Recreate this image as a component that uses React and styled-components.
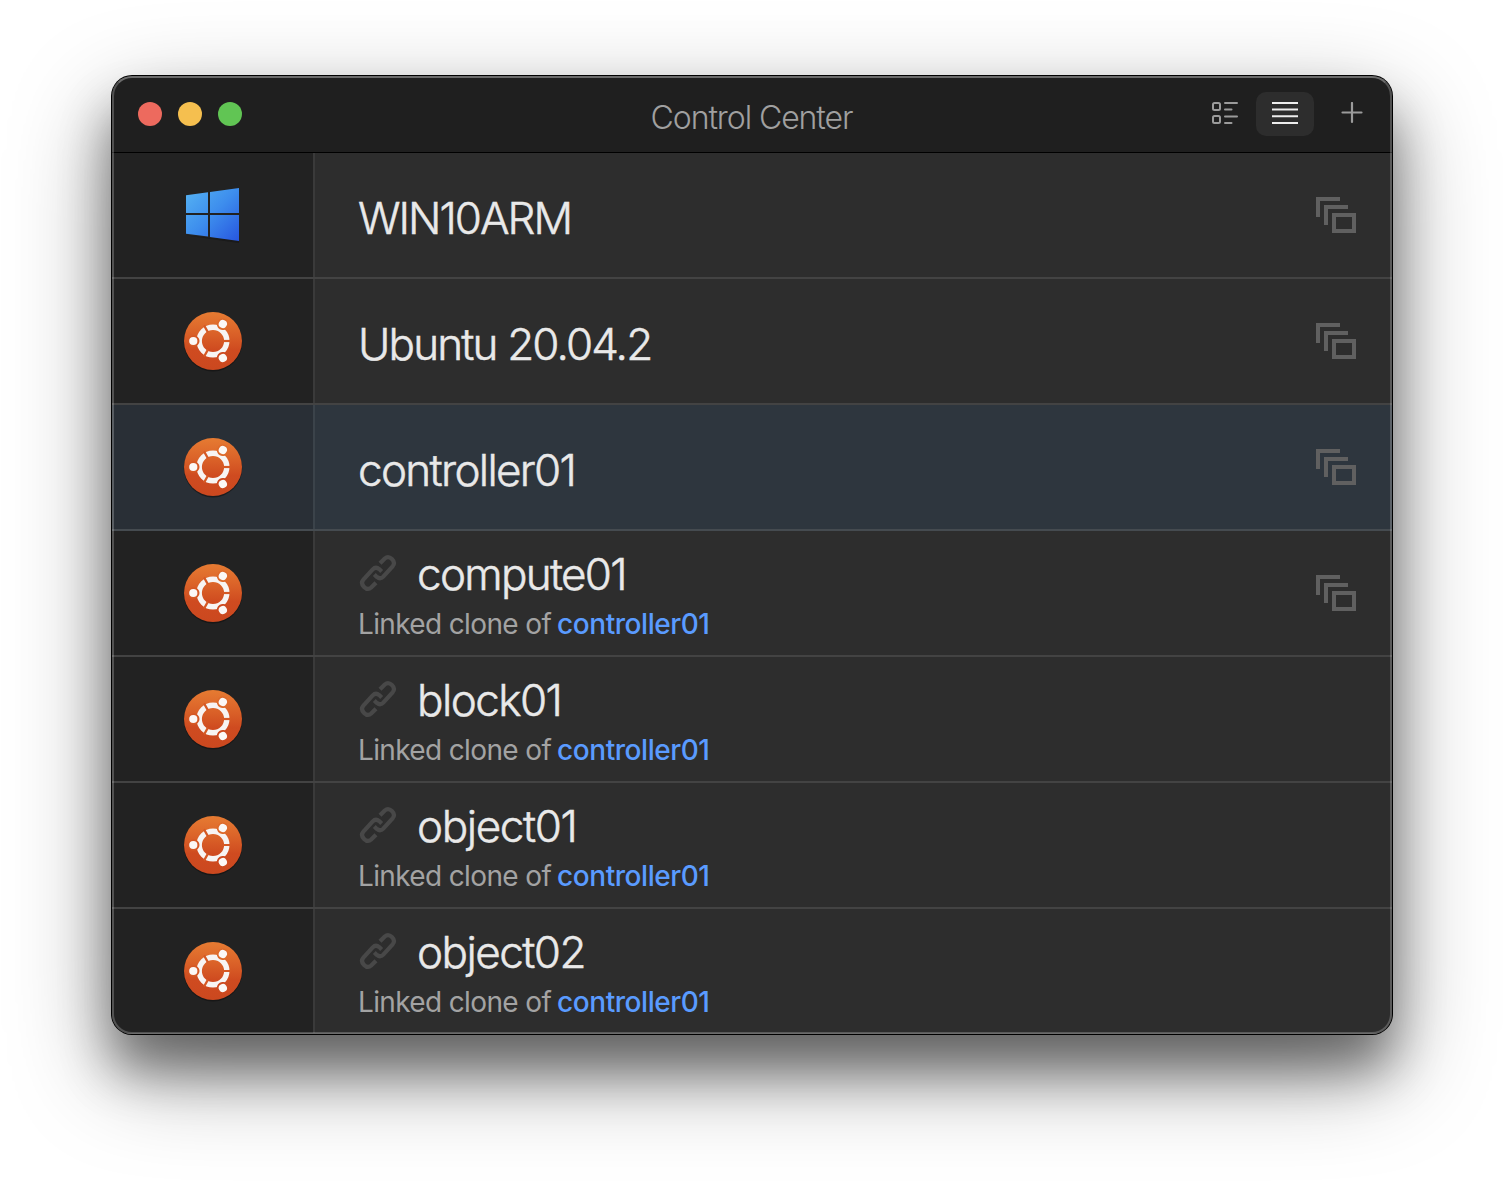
import React from "react";
import styled, { createGlobalStyle } from "styled-components";

const GlobalStyle = createGlobalStyle`
  * { box-sizing: border-box; }
  html, body { margin: 0; background: #fff; }
  body { font-family: Inter, "Noto Sans", sans-serif; overflow: hidden; }
`;

const Desktop = styled.main`
  width: 1504px;
  height: 1182px;
  padding: 76px 112px 148px;
  background: #fff;
  overflow: hidden;
`;

const Window = styled.section`
  position: relative;
  display: flex;
  flex-direction: column;
  width: 1280px;
  height: 958px;
  border-radius: 20px;
  background: #2d2d2d;
  box-shadow: 0 0 0 1px #000, 0 36px 50px rgba(0, 0, 0, 0.42), 0 36px 100px rgba(0, 0, 0, 0.4);

  &::after {
    content: "";
    position: absolute;
    inset: 0;
    border: 2px solid rgba(255, 255, 255, 0.22);
    border-top-color: rgba(255, 255, 255, 0.34);
    border-radius: 20px;
    pointer-events: none;
  }
`;

const TitleBar = styled.header`
  display: grid;
  grid-template-columns: 1fr auto 1fr;
  align-items: center;
  flex: none;
  height: 77px;
  padding: 0 29px 0 26px;
  border-bottom: 1px solid #000;
  border-radius: 20px 20px 0 0;
  background: #1f1f1f;
`;

const Lights = styled.div`
  display: flex;
  gap: 16px;
`;

const Light = styled.span`
  width: 24px;
  height: 24px;
  border-radius: 50%;
  background: ${(p) => p.$color};
`;

const Title = styled.h1`
  margin: 8px 0 0 2px;
  font-size: 32px;
  font-weight: 300;
  line-height: 40px;
  letter-spacing: ${(p) => p.$spacing}px;
  color: #a0a0a0;
  white-space: nowrap;
`;

const Tools = styled.div`
  display: flex;
  justify-content: flex-end;
  align-items: center;
`;

const ToolButton = styled.button`
  display: flex;
  align-items: center;
  justify-content: center;
  width: ${(p) => p.$width}px;
  height: 44px;
  margin: 0 0 0 ${(p) => p.$gap || 0}px;
  padding: 0 0 ${(p) => p.$lift || 0}px;
  border: 0;
  border-radius: 10px;
  background: ${(p) => (p.$active ? "#2d2d2d" : "transparent")};
`;

const List = styled.ul`
  flex: 1;
  min-height: 0;
  margin: 0;
  padding: 0;
  list-style: none;
  overflow: hidden;
  border-radius: 0 0 20px 20px;
`;

const Row = styled.li`
  display: flex;
  height: 126px;
  border-bottom: 2px solid ${(p) => (p.$selected ? "#454b50" : "#434343")};
  background: ${(p) => (p.$selected ? "#2e363e" : "#2d2d2d")};
`;

const IconCell = styled.div`
  display: flex;
  justify-content: center;
  flex: none;
  width: 203px;
  padding-top: ${(p) => p.$top}px;
  border-right: 2px solid ${(p) => (p.$selected ? "#3b434a" : "#3a3a3a")};
  background: ${(p) => (p.$selected ? "#292f36" : "#222222")};
`;

const Details = styled.div`
  display: flex;
  flex: 1;
  flex-direction: column;
  padding: ${(p) => (p.$linked ? 16 : 38)}px 0 0 43px;
`;

const NameLine = styled.div`
  display: flex;
  align-items: center;
  gap: 19px;
  height: 54px;
`;

const Name = styled.span`
  font-size: 44px;
  font-weight: 300;
  line-height: 54px;
  letter-spacing: ${(p) => p.$spacing}px;
  color: #e9e9e9;
  -webkit-text-stroke: 0.5px #e9e9e9;
  white-space: nowrap;
`;

const Origin = styled.div`
  display: flex;
  gap: 6px;
  margin-top: 5px;
  font-size: 28px;
  line-height: 36px;
  letter-spacing: ${(p) => p.$spacing}px;
  color: #a3a3a3;
  white-space: nowrap;
`;

const OriginLink = styled.span`
  font-weight: 500;
  letter-spacing: ${(p) => p.$spacing}px;
  color: #5a9bff;
`;

const SnapshotCell = styled.div`
  flex: none;
  padding: 44px 35px 0 0;
`;

const LinkGlyph = styled.svg`
  flex: none;
  margin-top: -2px;
`;

function WindowsIcon() {
  return (
    <svg width="55" height="56" viewBox="0 0 55 56">
      <defs>
        <linearGradient id="winFill" x1="0" y1="0" x2="1" y2="1">
          <stop offset="0" stopColor="#56b4f3" />
          <stop offset="0.5" stopColor="#3d8ded" />
          <stop offset="1" stopColor="#2756df" />
        </linearGradient>
      </defs>
      <path fill="#111" opacity=".5" d="M1 48.500 23 51.500 25 52 54 56V53Z" />
      <path
        fill="url(#winFill)"
        d="M1 8.200 23 5.200V26H1ZM25 4.900 54 1V26H25ZM1 28H23V49.600L1 46.800ZM25 28H54V54L25 50Z"
      />
    </svg>
  );
}

function UbuntuIcon() {
  return (
    <svg width="62" height="62" viewBox="-31 -31 62 62">
      <defs>
        <linearGradient id="ubuntuFill" x1="0" y1="0" x2="0" y2="1">
          <stop offset="0" stopColor="#e67b32" />
          <stop offset="0.35" stopColor="#db6329" />
          <stop offset="0.65" stopColor="#cf4b20" />
          <stop offset="1" stopColor="#cb481f" />
        </linearGradient>
      </defs>
      <circle cy="1.200" r="29.200" fill="#111" opacity=".6" />
      <circle r="29" fill="url(#ubuntuFill)" />
      <circle r="13.800" fill="none" stroke="#f7f4f3" strokeWidth="5.400" />
      {[0, 120, 240].map((angle) => (
        <g key={angle} transform={`rotate(${angle})`}>
          <path d="M10 0H18" stroke="#d55925" strokeWidth="2.200" />
          <circle cx="-19.300" r="5.800" fill={angle === 0 ? "#d55925" : angle === 120 ? "#dd6a2b" : "#cd4a20"} />
          <circle cx="-19.700" r="4.100" fill="#fbf8f6" />
        </g>
      ))}
    </svg>
  );
}

function SnapshotIcon() {
  return (
    <svg width="41" height="37" viewBox="0 0 41 37" fill="none" stroke="#606060" strokeWidth="4">
      <path d="M2 20V2H24M10 28V10H32" />
      <rect x="18" y="18" width="20" height="16" />
    </svg>
  );
}

const LINK_HALF =
  "M26 15.300L30.800 10.500Q34.200 7.400 37.900 11.100Q41.700 14.800 38.600 18.400L29.300 28.600Q26.200 31.800 22.800 28.900L20.300 26.500";

function LinkIcon() {
  return (
    <LinkGlyph width="40" height="40" viewBox="4 5 40 40" fill="none" stroke="#484848" strokeWidth="4.200">
      <path d={LINK_HALF} />
      <path d={LINK_HALF} transform="rotate(180 24 25)" />
    </LinkGlyph>
  );
}

function DetailViewIcon() {
  return (
    <svg width="28" height="26" viewBox="0 0 28 26" fill="none" stroke="#9b9b9b" strokeWidth="2" strokeLinecap="round">
      <rect x="2" y="2" width="7" height="7" rx="1.500" />
      <rect x="2" y="15" width="7" height="7" rx="1.500" />
      <path d="M14 2H26M14 8.500H20.500M14 15.500H26M14 22H20.500" />
    </svg>
  );
}

function ListViewIcon() {
  return (
    <svg width="26" height="24" viewBox="0 0 26 24" stroke="#ededed" strokeWidth="2">
      <path d="M0 2H26M0 8.500H26M0 15.300H26M0 22H26" />
    </svg>
  );
}

function PlusIcon() {
  return (
    <svg width="22" height="22" viewBox="0 0 22 22" stroke="#9b9b9b" strokeWidth="2.200" strokeLinecap="round">
      <path d="M1.500 10.500H20.500M11 1V20" />
    </svg>
  );
}

const machines = [
  { name: "WIN10ARM", os: "windows", snapshots: true, spacing: -2 },
  { name: "Ubuntu 20.04.2", os: "ubuntu", snapshots: true, spacing: -1.85 },
  { name: "controller01", os: "ubuntu", snapshots: true, selected: true, spacing: -1.67 },
  { name: "compute01", os: "ubuntu", snapshots: true, parent: "controller01", spacing: -1.7 },
  { name: "block01", os: "ubuntu", parent: "controller01", spacing: -1.55 },
  { name: "object01", os: "ubuntu", parent: "controller01", spacing: -1.4 },
  { name: "object02", os: "ubuntu", parent: "controller01", spacing: -1.55 },
];

function MachineRow({ machine }) {
  const { name, os, snapshots, selected, parent, spacing } = machine;
  return (
    <Row $selected={selected}>
      <IconCell $selected={selected} $top={os === "windows" ? 34 : 31}>
        {os === "windows" ? <WindowsIcon /> : <UbuntuIcon />}
      </IconCell>
      <Details $linked={Boolean(parent)}>
        <NameLine>
          {parent && <LinkIcon />}
          <Name $spacing={spacing}>{name}</Name>
        </NameLine>
        {parent && (
          <Origin $spacing={-0.64}>
            <span>Linked clone of</span>
            <OriginLink $spacing={-0.45}>{parent}</OriginLink>
          </Origin>
        )}
      </Details>
      {snapshots && (
        <SnapshotCell>
          <SnapshotIcon />
        </SnapshotCell>
      )}
    </Row>
  );
}

export default function App() {
  return (
    <Desktop>
      <GlobalStyle />
      <Window>
        <TitleBar>
          <Lights>
            <Light $color="#ed6a5e" />
            <Light $color="#f5bf4f" />
            <Light $color="#61c554" />
          </Lights>
          <Title $spacing={-1.08}>Control Center</Title>
          <Tools>
            <ToolButton $width={28} aria-label="Detail view">
              <DetailViewIcon />
            </ToolButton>
            <ToolButton $width={58} $gap={17} $lift={2} $active aria-label="List view">
              <ListViewIcon />
            </ToolButton>
            <ToolButton $width={22} $gap={27} $lift={2} aria-label="Add">
              <PlusIcon />
            </ToolButton>
          </Tools>
        </TitleBar>
        <List>
          {machines.map((machine) => (
            <MachineRow key={machine.name} machine={machine} />
          ))}
        </List>
      </Window>
    </Desktop>
  );
}
